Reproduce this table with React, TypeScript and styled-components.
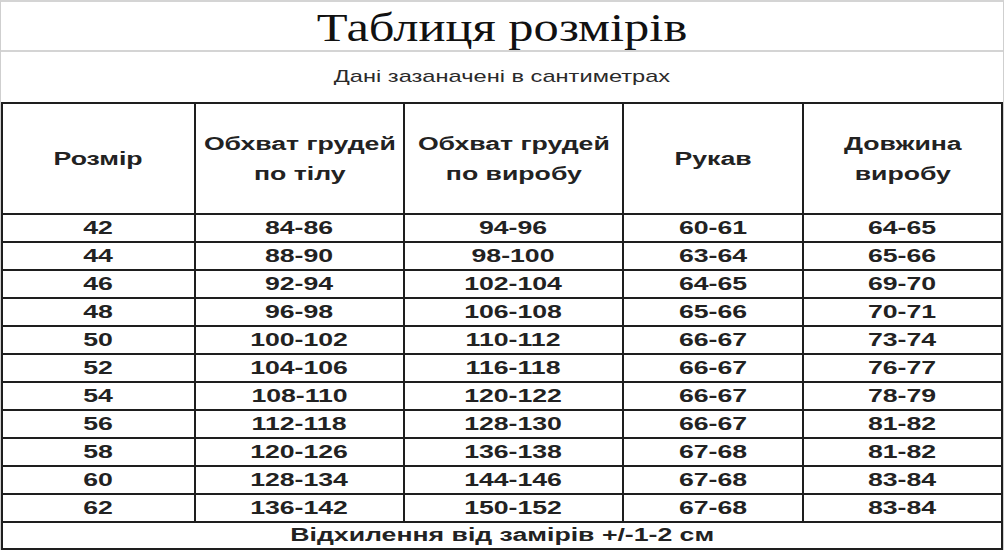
import styled, { createGlobalStyle } from 'styled-components';

const GlobalStyle = createGlobalStyle`
  html, body {
    margin: 0;
    padding: 0;
    background: #ffffff;
  }
`;

const Page = styled.div`
  width: 1004px;
  height: 550px;
  box-sizing: border-box;
  border-left: 1px solid #cfcfcf;
  border-right: 1px solid #cfcfcf;
  border-top: 2px solid #d4d4d4;
  display: flex;
  flex-direction: column;
  overflow: hidden;
`;

const TitleRow = styled.div`
  height: 48px;
  border-bottom: 2px solid #d4d4d4;
  display: flex;
  align-items: center;
  justify-content: center;
`;

const SubtitleRow = styled.div`
  height: 50px;
  display: flex;
  align-items: center;
  justify-content: center;
`;

// the source picture is stretched sideways, so text is widened to match
const Stretch = styled.span<{ $sx?: number }>`
  display: inline-block;
  transform: scaleX(${(p) => p.$sx ?? 1.48});
  white-space: nowrap;
`;

const Title = styled(Stretch)`
  font-family: 'Liberation Serif', 'Times New Roman', serif;
  font-size: 39px;
  line-height: 1;
  color: #111;
  margin-top: 2px;
`;

const Subtitle = styled(Stretch)`
  font-family: 'Liberation Sans', Arial, sans-serif;
  font-size: 17px;
  color: #2a2a2a;
`;

const Grid = styled.div`
  display: grid;
  grid-template-columns: 191px 207px 217px 178px 197px;
  grid-template-rows: 109px repeat(11, 26px) 25px;
  gap: 2px;
  padding: 2px;
  background: #1e1e1e;
  width: max-content;
`;

const Cell = styled.div<{ $span?: number }>`
  background: #ffffff;
  display: flex;
  align-items: center;
  justify-content: center;
  text-align: center;
  grid-column: span ${(p) => p.$span ?? 1};
  font-family: 'Liberation Sans', Arial, sans-serif;
  font-weight: bold;
  font-size: 18px;
  color: #222;
`;

const HeadText = styled(Stretch)`
  line-height: 30px;
`;

const headers = [
  ['Розмір'],
  ['Обхват грудей', 'по тілу'],
  ['Обхват грудей', 'по виробу'],
  ['Рукав'],
  ['Довжина', 'виробу'],
];

const rows = [
  ['42', '84-86', '94-96', '60-61', '64-65'],
  ['44', '88-90', '98-100', '63-64', '65-66'],
  ['46', '92-94', '102-104', '64-65', '69-70'],
  ['48', '96-98', '106-108', '65-66', '70-71'],
  ['50', '100-102', '110-112', '66-67', '73-74'],
  ['52', '104-106', '116-118', '66-67', '76-77'],
  ['54', '108-110', '120-122', '66-67', '78-79'],
  ['56', '112-118', '128-130', '66-67', '81-82'],
  ['58', '120-126', '136-138', '67-68', '81-82'],
  ['60', '128-134', '144-146', '67-68', '83-84'],
  ['62', '136-142', '150-152', '67-68', '83-84'],
];

export default function App() {
  return (
    <>
      <GlobalStyle />
      <Page>
        <TitleRow>
          <Title $sx={1.295}>Таблиця розмірів</Title>
        </TitleRow>
        <SubtitleRow>
          <Subtitle $sx={1.39}>Дані зазаначені в сантиметрах</Subtitle>
        </SubtitleRow>
        <Grid>
          {headers.map((lines, i) => (
            <Cell key={`h${i}`}>
              <HeadText>
                {lines.map((l, j) => (
                  <div key={j}>{l}</div>
                ))}
              </HeadText>
            </Cell>
          ))}
          {rows.map((row, r) =>
            row.map((v, c) => (
              <Cell key={`${r}-${c}`}>
                <Stretch>{v}</Stretch>
              </Cell>
            ))
          )}
          <Cell $span={5}>
            <Stretch>Відхилення від замірів +/-1-2 см</Stretch>
          </Cell>
        </Grid>
      </Page>
    </>
  );
}
